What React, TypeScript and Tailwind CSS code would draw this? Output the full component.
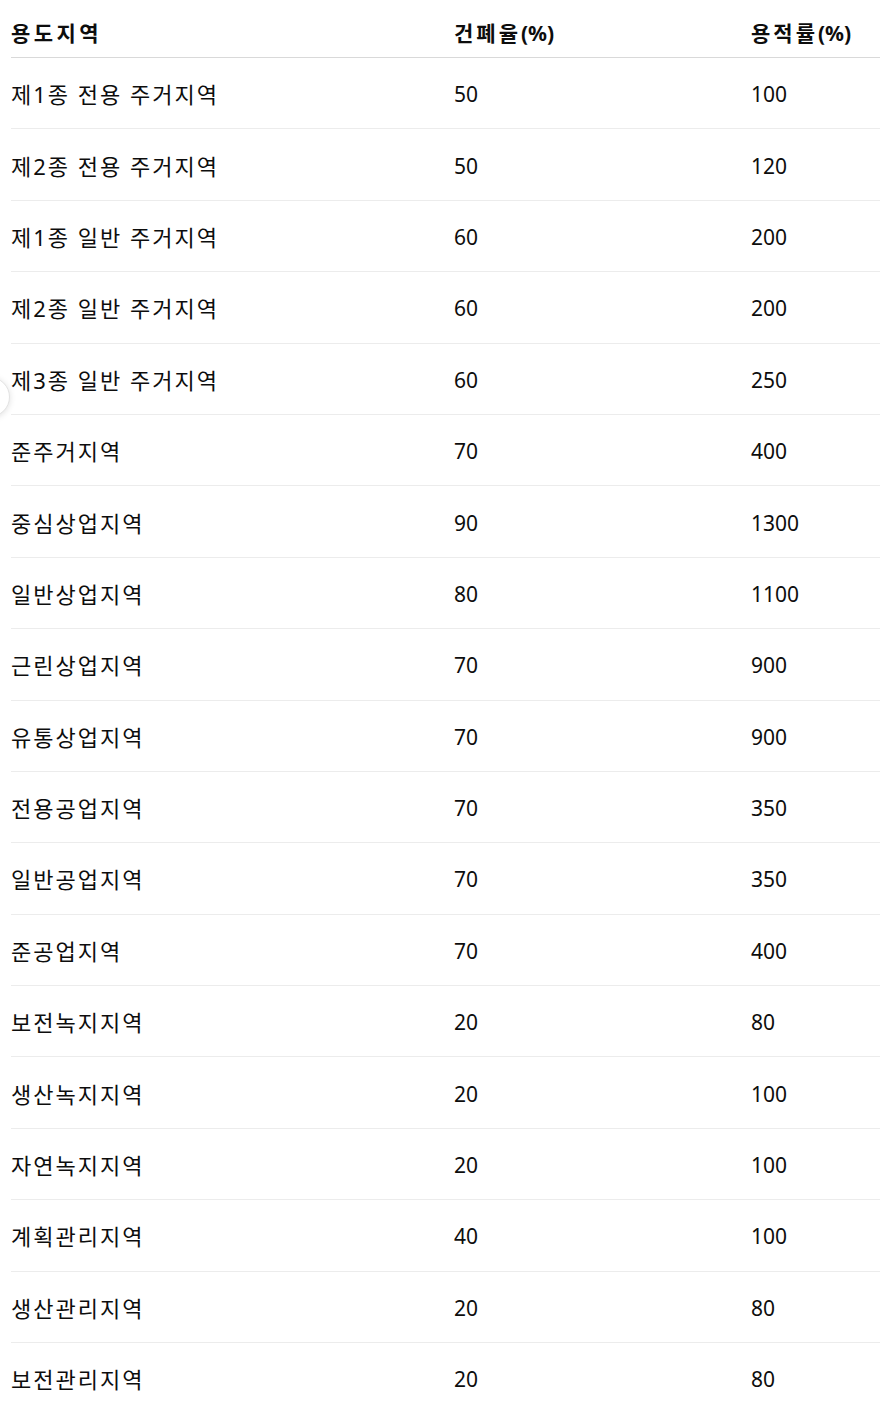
const rows: [string, string, string][] = [
  ['제1종 전용 주거지역', '50', '100'],
  ['제2종 전용 주거지역', '50', '120'],
  ['제1종 일반 주거지역', '60', '200'],
  ['제2종 일반 주거지역', '60', '200'],
  ['제3종 일반 주거지역', '60', '250'],
  ['준주거지역', '70', '400'],
  ['중심상업지역', '90', '1300'],
  ['일반상업지역', '80', '1100'],
  ['근린상업지역', '70', '900'],
  ['유통상업지역', '70', '900'],
  ['전용공업지역', '70', '350'],
  ['일반공업지역', '70', '350'],
  ['준공업지역', '70', '400'],
  ['보전녹지지역', '20', '80'],
  ['생산녹지지역', '20', '100'],
  ['자연녹지지역', '20', '100'],
  ['계획관리지역', '40', '100'],
  ['생산관리지역', '20', '80'],
  ['보전관리지역', '20', '80'],
];

export default function App() {
  return (
    <div
      className="relative h-[1412px] w-[880px] overflow-hidden bg-white text-[#0d0d0d]"
      style={{ fontFamily: '"Noto Sans", "Noto Sans CJK KR", sans-serif' }}
    >
      <div className="ml-[11px]">
        <div className="grid grid-cols-[443px_297px_1fr] border-b border-[#d9d9d9] pt-[21px] pb-[12px] text-[21px] font-bold leading-[24px]">
          <div className="tracking-[3.4px]">용도지역</div>
          <div>
            <span className="tracking-[3px]">건폐율</span>(%)
          </div>
          <div>
            <span className="tracking-[3px]">용적률</span>(%)
          </div>
        </div>
        {rows.map(([zone, bcr, far]) => (
          <div
            key={zone}
            className="grid h-[71.4px] grid-cols-[443px_297px_1fr] items-center border-b border-[#ececec] pt-[2px] text-[21px] leading-[24px]"
          >
            <div className="text-[22px] tracking-[2px]">{zone}</div>
            <div>{bcr}</div>
            <div>{far}</div>
          </div>
        ))}
      </div>

      <div className="absolute left-[-30px] top-[377px] h-[40px] w-[40px] rounded-full border border-[#e3e3e3] bg-white shadow-[0_1px_6px_rgba(0,0,0,0.12)]" />
    </div>
  );
}
